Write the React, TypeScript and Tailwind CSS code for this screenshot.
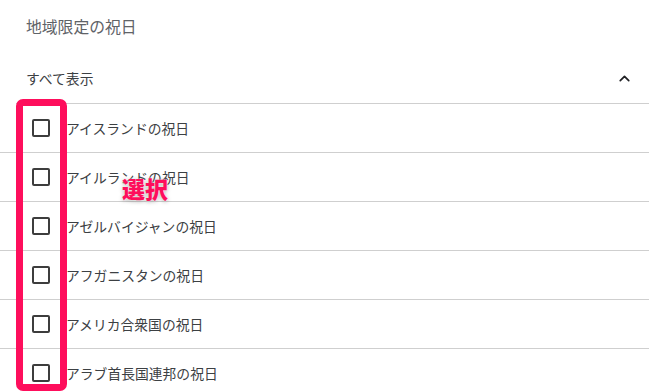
import { ChevronUp } from 'lucide-react';

const regions = [
  'アイスランドの祝日',
  'アイルランドの祝日',
  'アゼルバイジャンの祝日',
  'アフガニスタンの祝日',
  'アメリカ合衆国の祝日',
  'アラブ首長国連邦の祝日',
];

export default function App() {
  return (
    <div className="relative w-[660px] h-[392px] overflow-hidden bg-white font-['Noto_Sans_CJK_JP',sans-serif]">
      {/* Section title */}
      <div className="h-[54px] pl-[26px] flex items-center text-[15.8px] text-[#5f6368]">
        地域限定の祝日
      </div>

      {/* Expand toggle */}
      <div className="h-[50px] ml-[16px] mr-[11px] pl-[10px] pr-[16px] flex items-center justify-between border-b border-[#cfcfcf]">
        <span className="text-[13.8px] text-[#3c4043]">すべて表示</span>
        <ChevronUp className="w-[17px] h-[17px] text-[#202124]" strokeWidth={2.4} />
      </div>

      {/* Region list */}
      <div className="w-[649px]">
        {regions.map((name) => (
          <RegionRow key={name} name={name} />
        ))}
      </div>

      {/* Annotation overlay */}
      <div className="absolute left-[16px] top-[99px] w-[51px] h-[292px] border-[7px] border-[#fe0e5c] rounded-[7px]" />
      <div className="absolute left-[122px] top-[177px] text-[23px] leading-[23px] font-black text-[#fe0e5c] [text-shadow:0_0_2px_#fff,0_1px_4px_rgba(0,0,0,0.35)]">
        選択
      </div>
    </div>
  );
}

function RegionRow({ name }: { name: string }) {
  return (
    <div className="h-[49px] flex items-center border-b border-[#cfcfcf]">
      <div className="ml-[32px] w-[18px] h-[18px] border-2 border-[#3d3d3d] rounded-[2px] shrink-0" />
      <span className="ml-[16px] text-[13.8px] text-[#3c4043]">{name}</span>
    </div>
  );
}
